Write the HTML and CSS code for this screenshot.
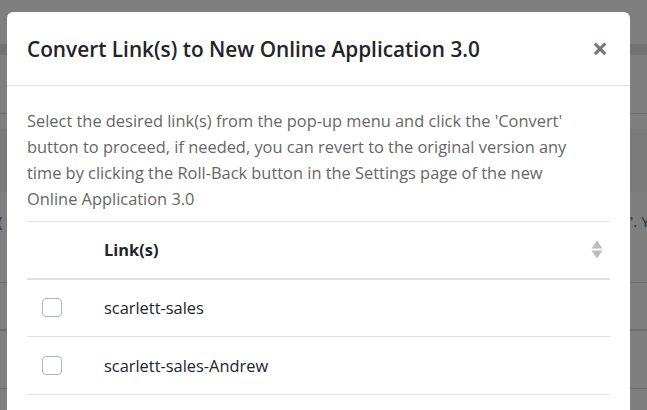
FILE: index.html
```html
<!DOCTYPE html>
<html>
<head>
<meta charset="utf-8">
<link rel="stylesheet" href="styles.css">
</head>
<body>
<div class="page">
  <div class="bg-top"></div>
  <div class="bg-band"></div>
  <div class="bg-gap1"></div>
  <div class="bg-line"></div>
  <div class="bg-gap2"></div>
  <div class="bg-dark"></div>
  <div class="bg-textrow"><span class="bg-left">.(</span><span class="bg-right">'. Y</span></div>
  <div class="bg-row bg-row1"></div>
  <div class="bg-row bg-row2"></div>
  <div class="bg-row bg-row3"></div>
</div>

<div class="modal">
  <div class="modal-header">
    <h5 class="modal-title">Convert Link(s) to New Online Application 3.0</h5>
    <span class="close">×</span>
  </div>
  <div class="modal-body">
    <p class="intro">Select the desired link(s) from the pop-up menu and click the 'Convert' button to proceed, if needed, you can revert to the original version any time by clicking the Roll-Back button in the Settings page of the new Online Application 3.0</p>
    <table class="links">
      <thead>
        <tr>
          <th class="col-check"></th>
          <th class="col-name">
            <div class="th-inner">
              <span>Link(s)</span>
              <svg class="sort" width="12" height="19" viewBox="0 0 12 19">
                <path d="M6 0.5 L11.5 8.5 L0.5 8.5 Z" fill="#bdbdbd"/>
                <path d="M0.5 10.5 L11.5 10.5 L6 18.5 Z" fill="#bdbdbd"/>
              </svg>
            </div>
          </th>
        </tr>
      </thead>
      <tbody>
        <tr>
          <td class="col-check"><span class="checkbox"></span></td>
          <td class="col-name">scarlett-sales</td>
        </tr>
        <tr>
          <td class="col-check"><span class="checkbox"></span></td>
          <td class="col-name">scarlett-sales-Andrew</td>
        </tr>
      </tbody>
    </table>
  </div>
</div>
</body>
</html>
```
FILE: styles.css
```css
* { box-sizing: border-box; }
html, body { margin: 0; padding: 0; }
body {
  width: 647px;
  height: 410px;
  overflow: hidden;
  background: #7f7f7f;
  font-family: "Open Sans", "Noto Sans", sans-serif;
  position: relative;
}
.page { width: 100%; }
.bg-top { height: 44px; background: #7f7f7f; }
.bg-band { height: 11px; background: #727272; }
.bg-gap1 { height: 58px; background: #7f7f7f; }
.bg-line { height: 1px; background: #6e6e6e; }
.bg-gap2 { height: 15px; background: #7f7f7f; }
.bg-dark { height: 63px; background: #7a7a7a; }
.bg-textrow {
  height: 91px;
  background: #7f7f7f;
  border-bottom: 1px solid #6e6e6e;
  position: relative;
  font-size: 15px;
  color: #2a2a3a;
}
.bg-left { position: absolute; left: -6px; top: 19px; }
.bg-right { position: absolute; left: 630px; top: 19px; white-space: nowrap; }
.bg-row { background: #7f7f7f; }
.bg-row1 { height: 48px; border-bottom: 2px solid #6e6e6e; }
.bg-row2 { height: 58px; border-bottom: 1px solid #6e6e6e; }
.bg-row3 { height: 40px; }

.modal {
  position: absolute;
  left: 7px;
  top: 12px;
  width: 623px;
  height: 420px;
  background: #fff;
  border-radius: 6px;
}
.modal-header {
  display: flex;
  align-items: center;
  justify-content: space-between;
  height: 74px;
  padding: 0 22px 0 20px;
  border-bottom: 1px solid #dee2e6;
}
.modal-title {
  margin: 0;
  font-size: 20.8px;
  font-weight: 600;
  color: #212529;
}
.close {
  font-size: 28px;
  font-weight: 700;
  color: #777;
  line-height: 1;
  margin-top: -2px;
}
.modal-body {
  padding: 22px 20px 20px;
}
.intro {
  margin: 0 0 9px;
  padding-right: 20px;
  font-size: 16.4px;
  line-height: 26px;
  color: #666;
}
.links {
  width: 583px;
  border-collapse: collapse;
  border-top: 1px solid #dee2e6;
}
.links th, .links td {
  text-align: left;
  padding: 0;
  font-size: 16.4px;
  color: #212529;
}
.links thead tr { height: 57px; border-bottom: 2px solid #dee2e6; }
.links tbody tr { height: 58px; border-bottom: 1px solid #dee2e6; }
.links th { font-weight: 700; }
.col-check { width: 77px; padding-left: 15px !important; }
.th-inner {
  display: flex;
  align-items: center;
  justify-content: space-between;
  padding-right: 7px;
}
.checkbox {
  display: block;
  width: 20px;
  height: 19px;
  border: 1px solid #adb5bd;
  border-radius: 4px;
  background: #fff;
}
.sort { display: block; }
```
